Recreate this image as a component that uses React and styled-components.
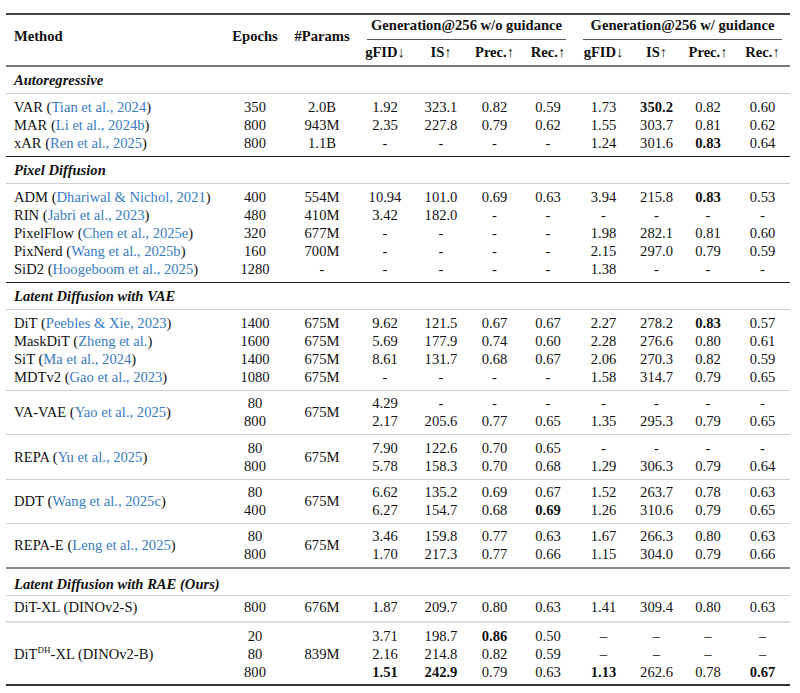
import React from 'react';
import styled, { createGlobalStyle, css } from 'styled-components';

const GlobalStyle = createGlobalStyle`
  body {
    margin: 0;
    background: #fff;
    font-family: "Liberation Serif", "Times New Roman", serif;
    color: #111;
  }
`;

const COLS = [216, 66, 68, 58, 54, 53, 54, 57, 49, 54, 55];

// rule styles under a block
const RULES = {
  light: '1px solid #cfcfcf',
  soft: '2px solid #dcdcdc',
  dark: '1px solid #222',
  gray: '2px solid #8a8a8a',
  bottom: '2px solid #333',
};

const cite = (name, ref) => ({ name, ref });

const sections = [
  {
    title: 'Autoregressive',
    end: 'dark',
    blocks: [
      {
        rows: [
          { m: cite('VAR', 'Tian et al., 2024'), e: '350', p: '2.0B', v: '1.92 323.1 0.82 0.59 1.73 *350.2 0.82 0.60' },
          { m: cite('MAR', 'Li et al., 2024b'), e: '800', p: '943M', v: '2.35 227.8 0.79 0.62 1.55 303.7 0.81 0.62' },
          { m: cite('xAR', 'Ren et al., 2025'), e: '800', p: '1.1B', v: '- - - - 1.24 301.6 *0.83 0.64' },
        ],
      },
    ],
  },
  {
    title: 'Pixel Diffusion',
    end: 'dark',
    blocks: [
      {
        rows: [
          { m: cite('ADM', 'Dhariwal & Nichol, 2021'), e: '400', p: '554M', v: '10.94 101.0 0.69 0.63 3.94 215.8 *0.83 0.53' },
          { m: cite('RIN', 'Jabri et al., 2023'), e: '480', p: '410M', v: '3.42 182.0 - - - - - -' },
          { m: cite('PixelFlow', 'Chen et al., 2025e'), e: '320', p: '677M', v: '- - - - 1.98 282.1 0.81 0.60' },
          { m: cite('PixNerd', 'Wang et al., 2025b'), e: '160', p: '700M', v: '- - - - 2.15 297.0 0.79 0.59' },
          { m: cite('SiD2', 'Hoogeboom et al., 2025'), e: '1280', p: '-', v: '- - - - 1.38 - - -' },
        ],
      },
    ],
  },
  {
    title: 'Latent Diffusion with VAE',
    end: 'gray',
    blocks: [
      {
        rule: 'light',
        rows: [
          { m: cite('DiT', 'Peebles & Xie, 2023'), e: '1400', p: '675M', v: '9.62 121.5 0.67 0.67 2.27 278.2 *0.83 0.57' },
          { m: cite('MaskDiT', 'Zheng et al.'), e: '1600', p: '675M', v: '5.69 177.9 0.74 0.60 2.28 276.6 0.80 0.61' },
          { m: cite('SiT', 'Ma et al., 2024'), e: '1400', p: '675M', v: '8.61 131.7 0.68 0.67 2.06 270.3 0.82 0.59' },
          { m: cite('MDTv2', 'Gao et al., 2023'), e: '1080', p: '675M', v: '- - - - 1.58 314.7 0.79 0.65' },
        ],
      },
      {
        rule: 'light',
        pt: 3,
        m: cite('VA-VAE', 'Yao et al., 2025'),
        p: '675M',
        rows: [
          { e: '80', v: '4.29 - - - - - - -' },
          { e: '800', v: '2.17 205.6 0.77 0.65 1.35 295.3 0.79 0.65' },
        ],
      },
      {
        rule: 'light',
        m: cite('REPA', 'Yu et al., 2025'),
        p: '675M',
        rows: [
          { e: '80', v: '7.90 122.6 0.70 0.65 - - - -' },
          { e: '800', v: '5.78 158.3 0.70 0.68 1.29 306.3 0.79 0.64' },
        ],
      },
      {
        rule: 'light',
        pt: 3,
        m: cite('DDT', 'Wang et al., 2025c'),
        p: '675M',
        rows: [
          { e: '80', v: '6.62 135.2 0.69 0.67 1.52 263.7 0.78 0.63' },
          { e: '400', v: '6.27 154.7 0.68 *0.69 1.26 310.6 0.79 0.65' },
        ],
      },
      {
        pt: 3,
        m: cite('REPA-E', 'Leng et al., 2025'),
        p: '675M',
        rows: [
          { e: '80', v: '3.46 159.8 0.77 0.63 1.67 266.3 0.80 0.63' },
          { e: '800', v: '1.70 217.3 0.77 0.66 1.15 304.0 0.79 0.66' },
        ],
      },
    ],
  },
  {
    title: 'Latent Diffusion with RAE (Ours)',
    tp: 6,
    tb: 2,
    end: 'bottom',
    blocks: [
      {
        rule: 'soft',
        pt: 2,
        pb: 5,
        rows: [
          { m: { name: 'DiT-XL (DINOv2-S)' }, e: '800', p: '676M', v: '1.87 209.7 0.80 0.63 1.41 309.4 0.80 0.63' },
        ],
      },
      {
        pt: 4,
        pb: 3,
        m: { name: 'DiT', sup: 'DH', rest: '-XL (DINOv2-B)' },
        p: '839M',
        rows: [
          { e: '20', v: '3.71 198.7 *0.86 0.50 – – – –' },
          { e: '80', v: '2.16 214.8 0.82 0.59 – – – –' },
          { e: '800', v: '*1.51 *242.9 0.79 0.63 *1.13 262.6 0.78 *0.67' },
        ],
      },
    ],
  },
];

const Page = styled.div`
  padding: 13px 10px 0 6px;
`;

const Table = styled.table`
  width: 784px;
  table-layout: fixed;
  border-collapse: collapse;
  font-size: 14.6px;
  line-height: 18px;
`;

const Head = styled.th`
  font-weight: 700;
  text-align: ${({ $left }) => ($left ? 'left' : 'center')};
  vertical-align: middle;
  white-space: nowrap;
  padding: ${({ $pad }) => $pad || '0'};
  ${({ $top }) => $top && css`border-top: 2px solid #444;`}
  ${({ $mid }) => $mid && css`border-bottom: 2px solid #777;`}
`;

const GroupLabel = styled.div`
  margin: 0 ${({ $r }) => $r}px 0 ${({ $l }) => $l}px;
  padding: 1px 0 5px;
  border-bottom: 1px solid #555;
`;

const Arrow = styled.span`
  font-weight: 400;
`;

const SectionCell = styled.td`
  font-weight: 700;
  font-style: italic;
  padding: ${({ $tp }) => $tp}px 8px ${({ $tb }) => $tb}px;
  border-bottom: ${RULES.light};
`;

const Cell = styled.td`
  text-align: ${({ $left }) => ($left ? 'left' : 'center')};
  white-space: nowrap;
  padding: ${({ $pt }) => $pt}px ${({ $left }) => ($left ? 8 : 0)}px ${({ $pb }) => $pb}px;
  font-weight: ${({ $bold }) => ($bold ? 700 : 400)};
  border-bottom: ${({ $rule }) => ($rule ? RULES[$rule] : 'none')};
  vertical-align: middle;
`;

const Ref = styled.span`
  color: #3a7cc2;
`;

const Sup = styled.sup`
  font-size: 9px;
  line-height: 0;
  vertical-align: 6px;
`;

const MethodName = ({ m }) => (
  <>
    {m.name}
    {m.sup && <Sup>{m.sup}</Sup>}
    {m.rest}
    {m.ref && (
      <>
        {' ('}
        <Ref>{m.ref}</Ref>)
      </>
    )}
  </>
);

const Block = ({ block, rule }) => {
  const n = block.rows.length;
  const pt = block.pt ?? 4;
  const pb = block.pb ?? 4;
  return block.rows.map((r, i) => {
    const first = i === 0;
    const last = i === n - 1;
    const cell = {
      $pt: first ? pt : 0,
      $pb: last ? pb : 0,
      $rule: last ? rule : null,
    };
    const span = { $pt: pt, $pb: pb, $rule: rule, rowSpan: n };
    return (
      <tr key={i}>
        {block.m ? (
          first && (
            <Cell $left {...span}>
              <MethodName m={block.m} />
            </Cell>
          )
        ) : (
          <Cell $left {...cell}>
            <MethodName m={r.m} />
          </Cell>
        )}
        <Cell {...cell}>{r.e}</Cell>
        {block.p ? first && <Cell {...span}>{block.p}</Cell> : <Cell {...cell}>{r.p}</Cell>}
        {r.v.split(' ').map((x, k) => {
          const bold = x.startsWith('*');
          return (
            <Cell key={k} {...cell} $bold={bold}>
              {bold ? x.slice(1) : x}
            </Cell>
          );
        })}
      </tr>
    );
  });
};

const metrics = [
  ['gFID', '↓'],
  ['IS', '↑'],
  ['Prec.', '↑'],
  ['Rec.', '↑'],
];

const App = () => (
  <Page>
    <GlobalStyle />
    <Table>
      <colgroup>
        {COLS.map((w, i) => (
          <col key={i} style={{ width: w }} />
        ))}
      </colgroup>
      <thead>
        <tr>
          <Head $left $top $mid rowSpan={2} $pad="0 8px 8px">
            Method
          </Head>
          <Head $top $mid rowSpan={2} $pad="0 0 8px">
            Epochs
          </Head>
          <Head $top $mid rowSpan={2} $pad="0 0 8px">
            #Params
          </Head>
          <Head $top colSpan={4}>
            <GroupLabel $l={11} $r={9}>Generation@256 w/o guidance</GroupLabel>
          </Head>
          <Head $top colSpan={4}>
            <GroupLabel $l={8} $r={8}>Generation@256 w/ guidance</GroupLabel>
          </Head>
        </tr>
        <tr>
          {[0, 1].map((g) =>
            metrics.map(([label, arrow]) => (
              <Head key={g + label} $mid $pad="3px 0 4px">
                {label}
                <Arrow>{arrow}</Arrow>
              </Head>
            ))
          )}
        </tr>
      </thead>
      {sections.map((s) => (
        <tbody key={s.title}>
          <tr>
            <SectionCell colSpan={11} $tp={s.tp ?? 4} $tb={s.tb ?? 4}>
              {s.title}
            </SectionCell>
          </tr>
          {s.blocks.map((b, i) => (
            <Block key={i} block={b} rule={i === s.blocks.length - 1 ? s.end : b.rule} />
          ))}
        </tbody>
      ))}
    </Table>
  </Page>
);

export default App;
